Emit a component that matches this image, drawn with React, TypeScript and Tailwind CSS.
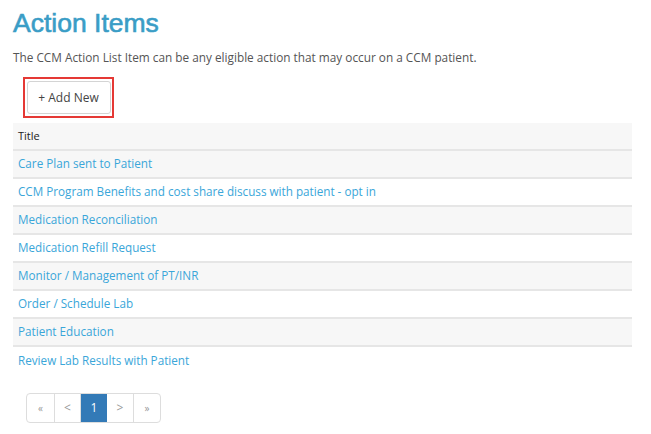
import React from "react";

const items = [
  "Care Plan sent to Patient",
  "CCM Program Benefits and cost share discuss with patient - opt in",
  "Medication Reconciliation",
  "Medication Refill Request",
  "Monitor / Management of PT/INR",
  "Order / Schedule Lab",
  "Patient Education",
  "Review Lab Results with Patient",
];

export default function App() {
  return (
    <div
      className="w-[651px] h-[434px] bg-white overflow-hidden"
      style={{ fontFamily: '"Open Sans", "Liberation Sans", sans-serif' }}
    >
      <div className="pl-[13px] pr-[19px] pt-[6px]">
        <h1
          className="text-[26.5px] leading-[34px] text-[#3a9dc6] font-normal [-webkit-text-stroke:0.6px_#3a9dc6]"
          style={{ fontFamily: '"Liberation Sans", Arial, sans-serif' }}
        >
          Action Items
        </h1>
        <p className="mt-[9px] text-[11.8px] leading-[16px] text-[#555555]">
          The CCM Action List Item can be any eligible action that may occur on a CCM patient.
        </p>
        <div className="mt-[12px] ml-[10px] w-[91px] h-[41px] border-2 border-solid border-[#e53935] flex items-center justify-center">
          <button className="w-[84px] h-[33px] border border-[#d4d4d4] rounded-[3px] bg-white text-[12px] text-[#444] flex items-center justify-center">
            + Add New
          </button>
        </div>
        <div className="mt-[5px] w-[619px]">
          <div className="h-[28px] bg-[#f7f7f7] border-b-2 border-[#e6e6e6] flex items-center px-[5px] text-[11px] text-[#222] font-medium">
            Title
          </div>
          {items.map((t, i) => (
            <div
              key={t}
              className={`h-[28px] flex items-center px-[5px] text-[11.7px] text-[#3aa6d9] ${
                i % 2 === 0 ? "bg-[#f7f7f7]" : "bg-white"
              } ${i < items.length - 1 ? "border-b-2 border-[#e6e6e6]" : ""}`}
            >
              {t}
            </div>
          ))}
        </div>
        <div className="mt-[18px] ml-[13px] flex w-fit border border-[#dddddd] rounded-[4px] overflow-hidden text-[12px] h-[30px]">
          <div className="w-[28px] flex items-center justify-center text-[#999] border-r border-[#dddddd] text-[10px]">«</div>
          <div className="w-[26px] flex items-center justify-center text-[#999] border-r border-[#dddddd]">&lt;</div>
          <div className="w-[26px] flex items-center justify-center bg-[#337ab7] text-white">1</div>
          <div className="w-[27px] flex items-center justify-center text-[#999] border-r border-[#dddddd]">&gt;</div>
          <div className="w-[26px] flex items-center justify-center text-[#999] text-[10px]">»</div>
        </div>
      </div>
    </div>
  );
}
